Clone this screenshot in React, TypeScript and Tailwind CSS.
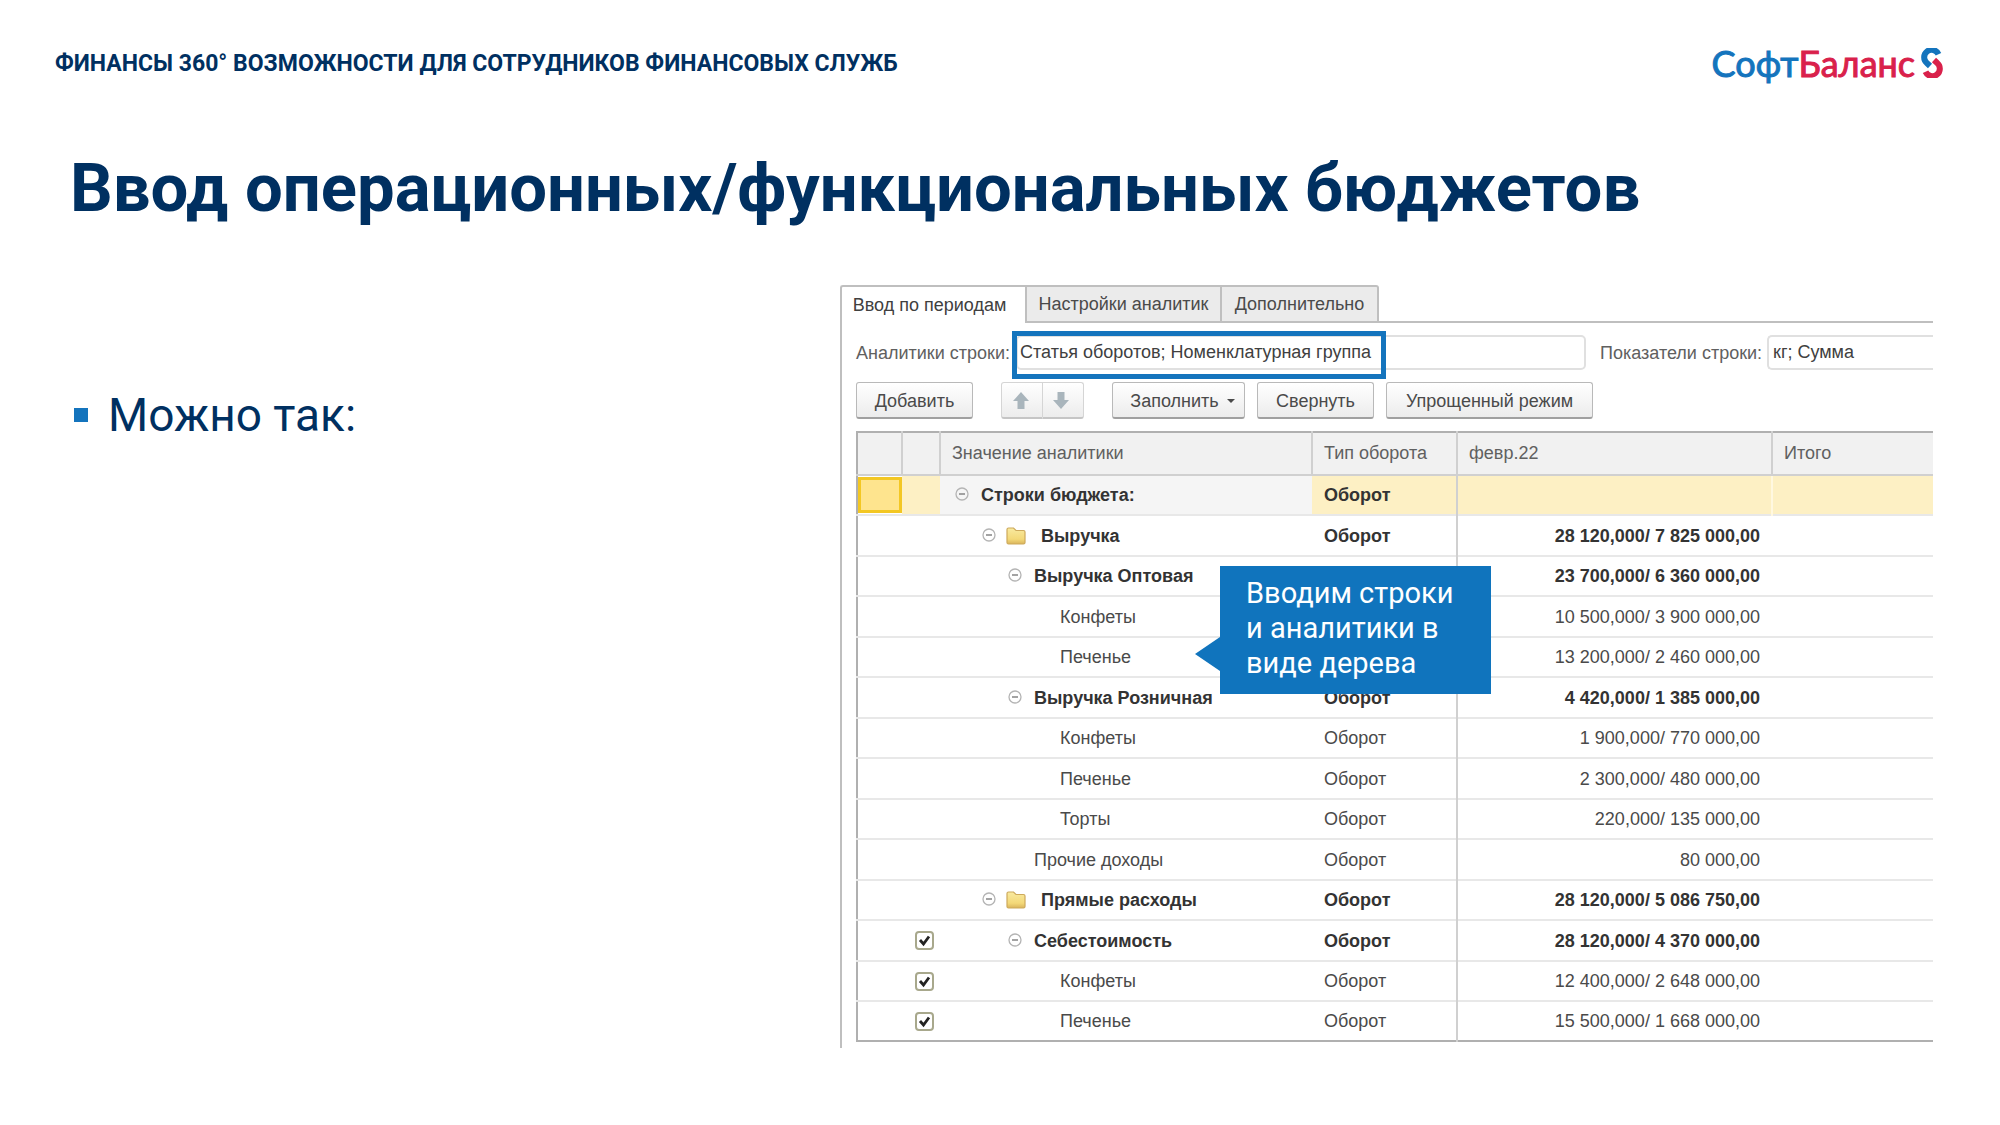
const SANS = "font-['Liberation_Sans',Arial,sans-serif]";

type Row = {
  name: string;
  level: number;
  kind: "root" | "folder" | "group" | "leaf";
  type: string;
  value: string;
  checked?: boolean;
};

const rows: Row[] = [
  { name: "Строки бюджета:", level: 0, kind: "root", type: "Оборот", value: "" },
  { name: "Выручка", level: 1, kind: "folder", type: "Оборот", value: "28 120,000/ 7 825 000,00" },
  { name: "Выручка Оптовая", level: 2, kind: "group", type: "", value: "23 700,000/ 6 360 000,00" },
  { name: "Конфеты", level: 4, kind: "leaf", type: "", value: "10 500,000/ 3 900 000,00" },
  { name: "Печенье", level: 4, kind: "leaf", type: "", value: "13 200,000/ 2 460 000,00" },
  { name: "Выручка Розничная", level: 2, kind: "group", type: "Оборот", value: "4 420,000/ 1 385 000,00" },
  { name: "Конфеты", level: 4, kind: "leaf", type: "Оборот", value: "1 900,000/ 770 000,00" },
  { name: "Печенье", level: 4, kind: "leaf", type: "Оборот", value: "2 300,000/ 480 000,00" },
  { name: "Торты", level: 4, kind: "leaf", type: "Оборот", value: "220,000/ 135 000,00" },
  { name: "Прочие доходы", level: 3, kind: "leaf", type: "Оборот", value: "80 000,00" },
  { name: "Прямые расходы", level: 1, kind: "folder", type: "Оборот", value: "28 120,000/ 5 086 750,00" },
  { name: "Себестоимость", level: 2, kind: "group", type: "Оборот", value: "28 120,000/ 4 370 000,00", checked: true },
  { name: "Конфеты", level: 4, kind: "leaf", type: "Оборот", value: "12 400,000/ 2 648 000,00", checked: true },
  { name: "Печенье", level: 4, kind: "leaf", type: "Оборот", value: "15 500,000/ 1 668 000,00", checked: true },
];

const indents = ["pl-[15px]", "pl-[42px]", "pl-[68px]", "pl-[94px]", "pl-[120px]"];

function Collapse() {
  return (
    <button type="button" aria-label="Свернуть строку" className="mb-[2px] shrink-0">
      <svg viewBox="0 0 14 14" className="block size-[14px]" fill="none">
        <circle cx="7" cy="7" r="6" stroke="#b4b4b4" strokeWidth="1.3" />
        <path d="M4 7h6" stroke="#858585" strokeWidth="1.5" />
      </svg>
    </button>
  );
}

function Folder() {
  return (
    <svg viewBox="0 0 20 18" className="ml-[10px] block h-[18px] w-5 shrink-0">
      <defs>
        <linearGradient id="folder" x1="0" y1="0" x2="0" y2="1">
          <stop offset="0" stopColor="#f9eaa0" />
          <stop offset="0.7" stopColor="#f3d878" />
          <stop offset="1" stopColor="#d9b45c" />
        </linearGradient>
      </defs>
      <path
        d="M1 2.5Q1 1 2.500 1H7.500L10 3.500H17.500Q19 3.500 19 5V15.500Q19 17 17.500 17H2.500Q1 17 1 15.500Z"
        fill="url(#folder)"
        stroke="#cda95b"
        strokeWidth="1.2"
      />
    </svg>
  );
}

function Logo() {
  return (
    <div className="flex items-center gap-[6px]">
      <span className="font-['Lato',sans-serif] text-[36px] leading-10 text-[#1474bd] [-webkit-text-stroke:1px_currentColor]">
        Софт<span className="text-[#d9214b]">Баланс</span>
      </span>
      <svg viewBox="0 0 22 30" className="h-[30px] w-[22px]" fill="none" strokeWidth="6">
        <path d="M17.500 6.200A7.500 7.500 0 1 0 5.800 15L9 18" stroke="#1474bd" />
        <path d="M4.500 23.800A7.500 7.500 0 1 0 16.200 15L13 12" stroke="#d9214b" />
      </svg>
    </div>
  );
}

const BTN =
  "h-[37px] rounded-[3px] border border-b-2 border-[#b9b9b9] border-b-[#a0a0a0] bg-gradient-to-b from-white to-[#ececec] pt-[2px] text-center whitespace-nowrap";

export default function App() {
  return (
    <main className="min-h-[1125px] bg-white pb-16 font-['Roboto',sans-serif] text-[#003061]">
      <header className="flex items-center justify-between pt-[42px] pr-[57px] pl-[55px]">
        <p className="pt-[2px] text-[23px] leading-10 font-bold">
          ФИНАНСЫ 360° ВОЗМОЖНОСТИ ДЛЯ СОТРУДНИКОВ ФИНАНСОВЫХ СЛУЖБ
        </p>
        <Logo />
      </header>

      <h1 className="mt-16 pl-[70px] text-[67px] leading-20 font-bold">
        Ввод операционных/функциональных бюджетов
      </h1>

      <div className="mt-[57px] flex pl-[74px]">
        <ul className="w-[766px] shrink-0 pt-[102px]">
          <li className="flex items-center gap-5 text-[46px] leading-14">
            <span className="size-[14px] bg-[#1474bd]" />
            Можно так:
          </li>
        </ul>

        <section className={`mr-[67px] min-w-0 flex-1 text-[18px] leading-6 text-[#4a4a4a] ${SANS}`}>
          <div className="flex" role="tablist">
            <button type="button" role="tab" aria-selected="true" className="h-[38px] w-[185px] rounded-tl-[3px] border-2 border-r-0 border-b-0 border-[#bfbfbf] pr-2 text-[#404040]">
              Ввод по периодам
            </button>
            <button type="button" role="tab" aria-selected="false" className="h-[38px] w-[197px] border-2 border-[#bfbfbf] bg-[#ebebeb]">
              Настройки аналитик
            </button>
            <button type="button" role="tab" aria-selected="false" className="h-[38px] w-[157px] rounded-tr-[3px] border-2 border-l-0 border-[#bfbfbf] bg-[#ebebeb]">
              Дополнительно
            </button>
            <span className="flex-1 border-b-2 border-[#bfbfbf]" />
          </div>

          <div className="border-l-2 border-[#bfbfbf] pb-[6px] pl-[14px]">
            <div className="flex items-center pt-3">
              <label htmlFor="analytics" className="w-[160px] shrink-0 whitespace-nowrap text-[#606060]">
                Аналитики строки:
              </label>
              <div className="relative">
                <input id="analytics" defaultValue="Статья оборотов; Номенклатурная группа" className="block h-[35px] w-[570px] rounded-[5px] border-2 border-[#e0e0e0] pl-[2px] text-[#404040]" />
                <span className="pointer-events-none absolute -top-1 -left-1 h-12 w-[374px] border-[5px] border-[#1474bd]" />
              </div>
              <label htmlFor="measures" className="w-[181px] shrink-0 pl-[14px] whitespace-nowrap text-[#606060]">
                Показатели строки:
              </label>
              <input id="measures" defaultValue="кг; Сумма" className="block h-[35px] min-w-0 flex-1 rounded-l-[5px] border-2 border-r-0 border-[#e0e0e0] pl-1 text-[#404040]" />
            </div>

            <div className="flex pt-3">
              <button type="button" className={`${BTN} w-[117px]`}>Добавить</button>
              <button type="button" aria-label="Вверх" className={`${BTN} ml-7 flex w-[42px] items-center justify-center rounded-r-none border-[#d5d5d5] border-b-[#c5c5c5] pr-[2px]`}>
                <svg viewBox="0 0 16 18" className="h-[18px] w-4" fill="#a9b5bc"><path d="M8 0L16 9H11.500V17H4.500V9H0Z" /></svg>
              </button>
              <button type="button" aria-label="Вниз" className={`${BTN} flex w-[41px] items-center justify-center rounded-l-none border-l-0 border-[#d5d5d5] border-b-[#c5c5c5] pr-1`}>
                <svg viewBox="0 0 16 18" className="h-[18px] w-4" fill="#a9b5bc"><path d="M8 17L16 8H11.500V0H4.500V8H0Z" /></svg>
              </button>
              <button type="button" className={`${BTN} ml-7 flex w-[133px] items-center justify-center gap-2 pl-2`}>
                Заполнить
                <span className="border-x-4 border-t-4 border-x-transparent border-t-[#4a4a4a]" />
              </button>
              <button type="button" className={`${BTN} ml-3 w-[117px]`}>Свернуть</button>
              <button type="button" className={`${BTN} ml-3 w-[207px]`}>Упрощенный режим</button>
            </div>

            <div className="relative mt-3">
              <table className="w-full table-fixed border-collapse border-y-2 border-l-2 border-[#b0b0b0]">
                <colgroup>
                  <col className="w-[45px]" />
                  <col className="w-[38px]" />
                  <col className="w-[372px]" />
                  <col className="w-[145px]" />
                  <col className="w-[315px]" />
                  <col />
                </colgroup>
                <thead>
                  <tr className="h-[43px] border-b-2 border-[#d0d0d0] bg-[#f1f1f1] text-left text-[#606060]">
                    <th className="border-r-2 border-[#d0d0d0]" />
                    <th className="border-r-2 border-[#d0d0d0]" />
                    <th className="border-r-2 border-[#d0d0d0] p-0 pb-[2px] pl-[11px] font-normal">Значение аналитики</th>
                    <th className="border-r-2 border-[#d0d0d0] p-0 pb-[2px] pl-[11px] font-normal">Тип оборота</th>
                    <th className="border-r-2 border-[#d0d0d0] p-0 pb-[2px] pl-[11px] font-normal">февр.22</th>
                    <th className="p-0 pb-[2px] pl-[11px] font-normal">Итого</th>
                  </tr>
                </thead>
                <tbody>
                  {rows.map((r, i) => {
                    const root = r.kind === "root";
                    const weight = r.kind === "leaf" ? "" : "font-bold text-[#333333]";
                    const fill = root ? "bg-[#fdf0c4]" : "";
                    return (
                      <tr key={i} className={`border-b-2 border-[#e8e8e8] last:border-[#b0b0b0] ${i % 2 === 1 && i < 12 ? "h-[41px]" : "h-10"} ${weight}`}>
                        <td className="p-0">
                          {root && <div className="h-9 border-[3px] border-[#f3c723] bg-[#fee48e]" />}
                        </td>
                        <td className={`p-0 ${fill}`}>
                          {r.checked && (
                            <label className="relative ml-[13px] block size-[19px]">
                              <input type="checkbox" defaultChecked aria-label={r.name} className="block size-[19px] appearance-none rounded-[4px] border-2 border-[#a8a88c] bg-white" />
                              <svg viewBox="0 0 19 19" className="pointer-events-none absolute inset-0" fill="none">
                                <path d="M5 9L8.500 13L14 5.500" stroke="#222222" strokeWidth="2.8" />
                              </svg>
                            </label>
                          )}
                        </td>
                        <td className={`p-0 ${root ? "bg-[#f5f5f5]" : ""}`}>
                          <div className={`flex items-center whitespace-nowrap ${indents[r.level]}`}>
                            {r.kind !== "leaf" && <Collapse />}
                            {r.kind === "folder" && <Folder />}
                            <span className={r.kind === "leaf" ? "" : r.kind === "folder" ? "ml-[15px]" : "ml-3"}>{r.name}</span>
                          </div>
                        </td>
                        <td className={`border-r-2 border-[#d0d0d0] p-0 pl-3 ${fill}`}>{r.type}</td>
                        <td className={`p-0 pr-3 text-right whitespace-nowrap ${fill} ${root ? "border-r-2 border-r-[#fff8e0]" : ""}`}>{r.value}</td>
                        <td className={fill} />
                      </tr>
                    );
                  })}
                </tbody>
              </table>

              <div className="absolute top-[135px] left-[364px] w-[271px] bg-[#1074bd] pt-[10px] pb-[13px] pl-[26px] font-['Roboto',sans-serif] text-[29px] leading-[35px] whitespace-nowrap text-white">
                Вводим строки
                <br />и аналитики в
                <br />
                виде дерева
                <svg viewBox="0 0 25 34" className="absolute top-[71px] -left-[25px] h-[34px] w-[25px]" fill="#1074bd">
                  <path d="M25 0V34L0 17Z" />
                </svg>
              </div>
            </div>
          </div>
        </section>
      </div>
    </main>
  );
}
